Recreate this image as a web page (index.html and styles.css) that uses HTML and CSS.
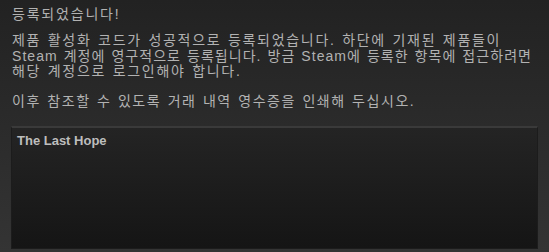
FILE: index.html
```html
<!DOCTYPE html>
<html lang="ko">
<head>
    <meta charset="UTF-8">
    <title>등록되었습니다!</title>
    <link rel="stylesheet" href="styles.css">
</head>
<body>
    <div class="receipt">
        <h2 class="title">등록되었습니다!</h2>
        <p class="notice">제품 활성화 코드가 성공적으로 등록되었습니다. 하단에 기재된 제품들이<br><span class="tight">Steam 계정에 영구적으로 등록됩니다. 방금 Steam에 등록한 항목에 접근하려면</span><br>해당 계정으로 로그인해야 합니다.</p>
        <p class="notice print">이후 참조할 수 있도록 거래 내역 영수증을 인쇄해 두십시오.</p>
        <div class="product-list">
            <div class="product">The Last Hope</div>
        </div>
    </div>
</body>
</html>
```

FILE: styles.css
```css
html, body {
    height: 100%;
}

body {
    margin: 0;
    font-family: "Liberation Sans", "Noto Sans CJK KR", sans-serif;
    color: #b2b2b2;
    background: linear-gradient(to bottom, #222222, #343434);
}

.receipt {
    padding: 6px 11px 0 12px;
}

.title {
    margin: 0;
    font-size: 14px;
    font-weight: normal;
    line-height: 17px;
    letter-spacing: 1.8px;
}

.notice {
    margin: 10px 0 0;
    font-size: 14px;
    line-height: 15.5px;
    letter-spacing: 1.7px;
    word-spacing: 1px;
    white-space: nowrap;
}

.notice .tight {
    letter-spacing: 1.05px;
}

.notice + .notice {
    margin-top: 14px;
}

.notice.print {
    letter-spacing: 1.55px;
}

.product-list {
    margin: 17px 0 0 -1px;
    height: 110px;
    padding: 5px 5px;
    border-top: 2px solid #3a3a3a;
    border-left: 1px solid #1c1c1c;
    border-right: 1px solid #1c1c1c;
    border-bottom: 1px solid #1c1c1c;
    background: linear-gradient(to bottom, #242424, #151515);
}

.product {
    font-size: 13px;
    font-weight: bold;
    color: #bdbdbd;
}
```
